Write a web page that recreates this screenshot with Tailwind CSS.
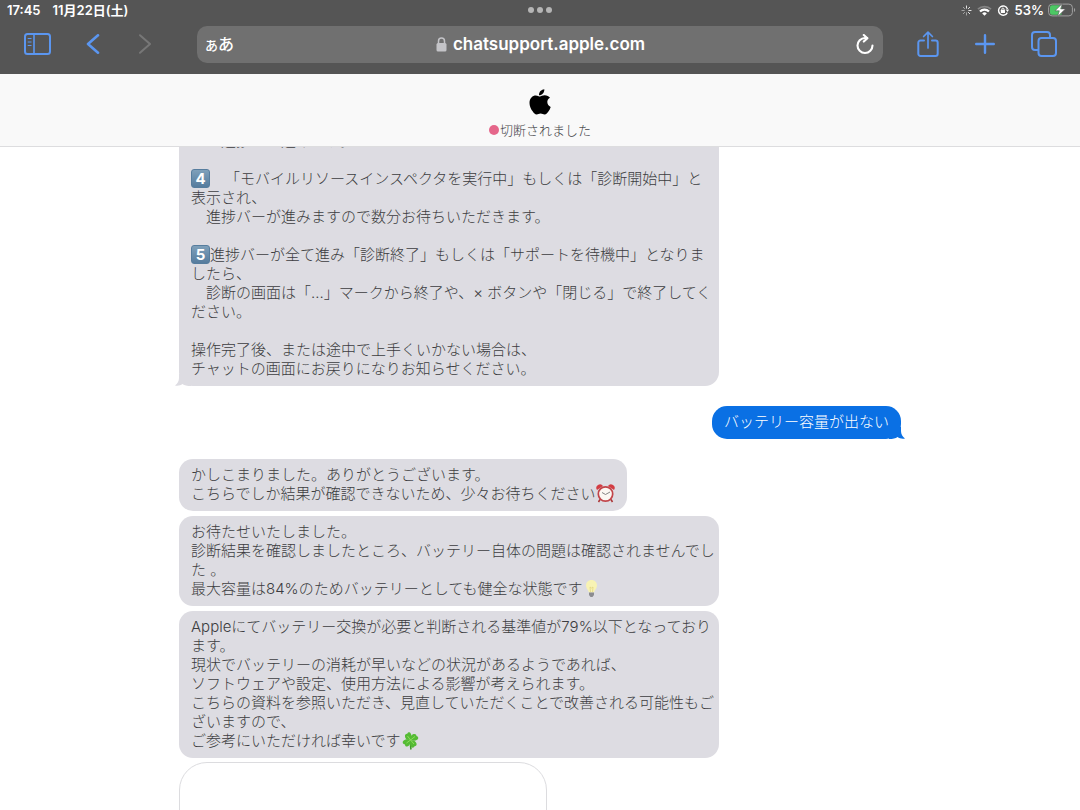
<!DOCTYPE html>
<html lang="ja">

<head>
	<meta charset="UTF-8" />
	<meta name="viewport" content="width=device-width, initial-scale=1.0" />
	<title>chatsupport.apple.com</title>
	<script src="https://cdn.jsdelivr.net/npm/@tailwindcss/browser@4"></script>
</head>

<body class="h-screen flex flex-col overflow-hidden bg-white font-['Inter','Noto_Sans_CJK_JP',sans-serif]">
	<!-- Browser chrome -->
	<div class="bg-[#555555] text-white shrink-0">
		<!-- Status bar -->
		<div class="h-5 px-[7px] grid grid-cols-3 items-center text-[13px] leading-5 font-semibold">
			<div class="flex gap-3 whitespace-nowrap">
				<span>17:45</span>
				<span>11月22日(土)</span>
			</div>
			<div class="flex justify-center gap-[3px]">
				<span class="size-[6px] rounded-full bg-[#b5b5b5]"></span>
				<span class="size-[6px] rounded-full bg-[#b5b5b5]"></span>
				<span class="size-[6px] rounded-full bg-[#b5b5b5]"></span>
			</div>
			<div class="flex justify-end items-center gap-[5px]">
				<svg class="size-[11px]" viewBox="0 0 12 12" fill="none" stroke="#fff" stroke-linecap="round">
					<path d="M6 1v2.5M9.5 2.5 8 4M11 6H8.5M9.5 9.5 8 8" opacity=".9" />
					<path d="M6 11V8.5M2.5 9.5 4 8M1 6h2.5M2.5 2.5 4 4" opacity=".5" />
				</svg>
				<svg class="w-[15px] h-[11px]" viewBox="0 0 15 11" fill="none">
					<path d="M1 4.2a9.3 9.3 0 0 1 13 0" stroke="#858585" stroke-width="1.8" />
					<path d="M3 6.6a6.3 6.3 0 0 1 9 0" stroke="#fff" stroke-width="2.2" />
					<path d="M5.2 8.5a3.2 3.2 0 0 1 4.6 0L7.5 10.8z" fill="#fff" />
				</svg>
				<svg class="w-3 h-[11px]" viewBox="0 0 12 11" fill="none">
					<path d="M10.3 7.6A4.6 4.6 0 1 1 10.5 4" stroke="#fff" stroke-width="1.4" />
					<path d="M8.6 4.4H12L10.6 7z" fill="#fff" />
					<rect x="3.8" y="4.8" width="4.2" height="3.2" rx=".5" fill="#fff" />
					<path d="M4.8 5.2V4.2a1.1 1.1 0 0 1 2.2 0v1" stroke="#fff" stroke-width=".9" />
				</svg>
				<span>53%</span>
				<svg class="w-7 h-[14px] -ml-px -mr-[3px]" viewBox="0 0 28 14" fill="none">
					<rect x=".6" y="1.1" width="23.8" height="11.8" rx="3.5" stroke="#a0a0a0" />
					<path d="M26 5c1.6.6 1.6 3.4 0 4z" fill="#a0a0a0" />
					<path d="M4 2.3h9.5v9.4H4a2 2 0 0 1-2-2V4.300a2 2 0 0 1 2-2z" fill="#4cc764" />
					<path d="M14.3.5 7 7.8h4.3L9.6 13.5l7.8-7.6h-4.7z" fill="#fff" stroke="#555" stroke-width=".6" />
				</svg>
			</div>
		</div>
		<!-- Toolbar -->
		<div class="h-[54px] pl-6 pr-[23px] pb-[6px] flex items-center text-[#5b96f0]">
			<button aria-label="サイドバー">
				<svg class="w-[27px] h-[22px]" viewBox="0 0 27 22" fill="none" stroke="currentColor" stroke-width="2">
					<rect x="1" y="1" width="25" height="20" rx="2.5" />
					<path d="M10 1v20" stroke-width="1.6" />
					<path d="M3.7 5.5h3.8M3.7 9h3.8M3.7 12.5h3.8" stroke-width="1.2" />
				</svg>
			</button>
			<button aria-label="戻る" class="ml-[35px]">
				<svg class="w-[14px] h-[20px]" viewBox="0 0 14 20" fill="none" stroke="currentColor" stroke-width="2.6" stroke-linecap="round" stroke-linejoin="round">
					<path d="M12 1.3 2 10l10 8.7" />
				</svg>
			</button>
			<button aria-label="進む" class="ml-[38px] text-[#777777]" disabled>
				<svg class="w-[14px] h-[20px]" viewBox="0 0 14 20" fill="none" stroke="currentColor" stroke-width="2" stroke-linecap="round" stroke-linejoin="round">
					<path d="M2 1.2 12 10 2 18.8" />
				</svg>
			</button>
			<div class="ml-[45px] h-[37px] flex-1 rounded-[10px] bg-[#707070] text-white px-2 flex items-center">
				<button aria-label="ページ設定" class="flex items-baseline font-medium leading-5">
					<span class="text-[13px]">あ</span><span class="text-base">あ</span>
				</button>
				<div class="flex-1 pr-2 flex items-center justify-center gap-[6px] text-[17px] leading-6 font-semibold">
					<svg class="w-[11px] h-[15px]" viewBox="0 0 11 15" fill="none">
						<rect x=".5" y="6" width="10" height="8.5" rx="1.5" fill="#c4c4c8" />
						<path d="M2.5 7V4a3 3 0 0 1 6 0v3" stroke="#c4c4c8" stroke-width="1.5" />
					</svg>
					<span>chatsupport.apple.com</span>
				</div>
				<button aria-label="再読み込み">
					<svg class="w-[20px] h-[21px]" viewBox="0 0 20 21" fill="none" stroke="currentColor" stroke-width="2.1" stroke-linecap="round" stroke-linejoin="round">
						<path d="M17.5 11.5a7.5 7.5 0 1 1-7.5-7.5h2" />
						<path d="M8.8 1 12.4 4.2 8.8 7.6" />
					</svg>
				</button>
			</div>
			<button aria-label="共有" class="ml-[34px]">
				<svg class="w-[22px] h-[27px]" viewBox="0 0 22 27" fill="none" stroke="currentColor" stroke-width="2" stroke-linecap="round" stroke-linejoin="round">
					<path d="M7 9.5H3.5A2.2 2.2 0 0 0 1.3 11.7v11.1A2.2 2.2 0 0 0 3.5 25h15a2.2 2.2 0 0 0 2.2-2.2V11.700a2.2 2.2 0 0 0-2.2-2.2H15" />
					<path d="M11 17V1.5M6.6 5.5 11 1.2l4.4 4.3" stroke-width="1.7" />
				</svg>
			</button>
			<button aria-label="新規タブ" class="ml-[36px]">
				<svg class="size-[20px]" viewBox="0 0 20 20" fill="none" stroke="currentColor" stroke-width="2.4" stroke-linecap="round">
					<path d="M10 1.2v17.6M1.2 10h17.6" />
				</svg>
			</button>
			<button aria-label="タブ一覧" class="ml-[36px]">
				<svg class="size-[26px]" viewBox="0 0 26 26" fill="none" stroke="currentColor" stroke-width="2">
					<path d="M7.5 19H4a3 3 0 0 1-3-3V4a3 3 0 0 1 3-3h12a3 3 0 0 1 3 3v3" />
					<rect x="7.5" y="7" width="17.5" height="18" rx="3" />
				</svg>
			</button>
		</div>
	</div>

	<!-- Chat header -->
	<header class="h-[73px] shrink-0 pt-[15px] flex flex-col items-center bg-[#f9f9f9] border-b border-[#dddddf]">
		<svg class="w-[22px] h-[26px]" viewBox="0 0 22 26" fill="#000">
			<path d="M15.3.2c.2 1.7-.5 3.2-1.4 4.3-1 1.1-2.4 1.9-3.9 1.8-.2-1.6.6-3.2 1.5-4.2C12.5 1 14 .2 15.3.2z" />
			<path d="M21 8.700c-1.7 1-2.7 2.500-2.700 4.400 0 2.200 1.400 4 3.400 4.800-.5 1.600-1.300 3.200-2.300 4.600-1 1.500-2.100 3-3.800 3-1.600 0-2.100-1-4-1-1.800 0-2.500 1-4 1-1.600 0-2.700-1.400-3.800-3C1.900 20.200.5 17 .5 13.900.5 9 3.700 6.400 6.800 6.400c1.700 0 3.100 1.100 4.100 1.100s2.700-1.200 4.800-1.200c2.200 0 4.200.9 5.300 2.400z" />
		</svg>
		<p class="mt-[5px] flex items-center text-[13px] leading-5 font-light text-[#444448]">
			<span class="size-[10px] mr-px rounded-full bg-[#e5668a]"></span>切断されました
		</p>
	</header>

	<!-- Conversation -->
	<main class="flex-1 min-h-0 overflow-hidden">
		<div class="w-full max-w-[722px] mx-auto flex flex-col items-start text-[15px] leading-[19px] font-light text-[#3c3c40] whitespace-nowrap [text-spacing-trim:space-all]">
			<div class="relative w-[540px] max-w-full -mt-4 px-3 pb-2 rounded-b-[14px] bg-[#dddce2]">
				<p>　の進捗バー進みます。<br /><br /></p>
				<p><span class="inline-block size-[19px] rounded-[3px] border border-[#567d9e] bg-linear-to-b from-[#7fa0ba] to-[#557c9e] text-white text-center text-[15px] leading-[17px] font-bold align-top">4</span>　「モバイルリソースインスペクタを実行中」もしくは「診断開始中」と<br />表示され、<br />　進捗バーが進みますので数分お待ちいただきます。<br /><br /></p>
				<p><span class="inline-block size-[19px] rounded-[3px] border border-[#567d9e] bg-linear-to-b from-[#7fa0ba] to-[#557c9e] text-white text-center text-[15px] leading-[17px] font-bold align-top">5</span>進捗バーが全て進み「診断終了」もしくは「サポートを待機中」となりま<br />したら、<br />　診断の画面は「...」マークから終了や、× ボタンや「閉じる」で終了してく<br />ださい。<br /><br /></p>
				<p>操作完了後、または途中で上手くいかない場合は、<br />チャットの画面にお戻りになりお知らせください。</p>
				<svg class="absolute -left-1 bottom-0 w-5 h-3" viewBox="0 0 20 12" fill="#dddce2">
					<path d="M4 0v4c0 3-1.5 5.5-4 7.5 3 .5 5.5 0 7.5-1.5 2 1.500 4.500 2 8.500 2V0z" />
				</svg>
			</div>

			<div class="relative self-end mt-5 px-3 pt-[6px] pb-2 rounded-[15px] bg-[#0a70e4] text-white">
				バッテリー容量が出ない
				<svg class="absolute -right-1 bottom-0 w-5 h-3" viewBox="0 0 20 12" fill="#0a70e4">
					<path d="M16 0v4c0 3 1.5 5.5 4 7.5-3 .5-5.500 0-7.500-1.500-2 1.500-4.500 2-8.500 2V0z" />
				</svg>
			</div>

			<div class="mt-5 px-3 pt-[6px] pb-2 rounded-[14px] bg-[#dddce2]">
				かしこまりました。ありがとうございます。<br />こちらでしか結果が確認できないため、少々お待ちください<svg class="inline-block size-[19px] align-top" viewBox="0 0 19 19" role="img" aria-label="目覚まし時計">
					<path d="M4 15.5 2.5 18M15 15.5 16.5 18" stroke="#a33" stroke-width="1.5" />
					<path d="M1 6a3.5 3.5 0 0 1 6-4zM18 6a3.5 3.5 0 0 0-6-4z" fill="#d33c42" />
					<circle cx="9.5" cy="10" r="7.2" fill="#fbf7f2" stroke="#c2454a" stroke-width="1.7" />
					<path d="M6 8.5 9.5 10.5 14 8" fill="none" stroke="#777" stroke-width=".9" />
				</svg>
			</div>

			<div class="w-[540px] max-w-full mt-[5px] px-3 pt-[6px] pb-2 rounded-[14px] bg-[#dddce2]">
				お待たせいたしました。<br />診断結果を確認しましたところ、バッテリー自体の問題は確認されませんでし<br />た 。<br />最大容量は84%のためバッテリーとしても健全な状態です<svg class="inline-block size-[19px] align-top" viewBox="0 0 19 19" role="img" aria-label="電球">
					<path d="M9.5 1C6 1 4 3.5 4 6.5c0 3 2.5 4.5 3 7h5c.5-2.5 3-4 3-7C15 3.5 13 1 9.5 1z" fill="#f8f3b4" />
					<path d="M8.5 13 8 8l1.5 1L11 8l-.5 5" fill="none" stroke="#e3d680" stroke-width=".8" />
					<path d="M7 13.5h5V16l-1.5 2h-2L7 16z" fill="#8c8c90" />
				</svg>
			</div>

			<div class="w-[540px] max-w-full mt-[5px] px-3 pt-[6px] pb-2 rounded-[14px] bg-[#dddce2]">
				Appleにてバッテリー交換が必要と判断される基準値が79%以下となっており<br />ます。<br />現状でバッテリーの消耗が早いなどの状況があるようであれば、<br />ソフトウェアや設定、使用方法による影響が考えられます。<br />こちらの資料を参照いただき、見直していただくことで改善される可能性もご<br />ざいますので、<br />ご参考にいただければ幸いです<svg class="inline-block size-[19px] align-top" viewBox="0 0 19 19" role="img" aria-label="四つ葉のクローバー">
					<path d="M9.5 9c0 4 0 7 .5 9.500" fill="none" stroke="#3f9a2a" stroke-width="1.6" />
					<g fill="#55bb35">
						<path d="M9.5 9C6 9.5 4 7.5 4 5.5c-.3-2 1-3 2.3-2.8C7 1 9 .8 9.7 2.5 11 4.5 10.5 7 9.5 9z" />
						<path d="M9.5 9c-.5-3.5 1-5.5 3-6 2-.4 3 .6 3 2 1.7.3 2.5 2.3 1 3.5-2 1.5-4.5 1.5-7 .5z" />
						<path d="M9.5 9c3.5.3 5.5 1.5 6 3.5.5 1.7-.6 2.8-2 2.8-.3 1.5-2.4 2-3.4.5-1.3-2-1.300-4.600-.6-6.800z" />
						<path d="M9.5 9c.3 3-.7 5.5-2.7 6.3-1.8.6-2.9-.5-2.8-1.9-1.8 0-3-2-1.8-3.400C4 8 7 8 9.500 9z" />
					</g>
					<path d="M9.5 9 6.5 5M9.5 9l4.5-3.5M9.5 9l3.500 4M9.500 9 5.500 12" stroke="#93e060" stroke-width=".9" />
				</svg>
			</div>

			<div class="w-[368px] h-40 mt-1 rounded-[28px] border border-[#dcdcdf] bg-white"></div>
		</div>
	</main>
</body>

</html>
